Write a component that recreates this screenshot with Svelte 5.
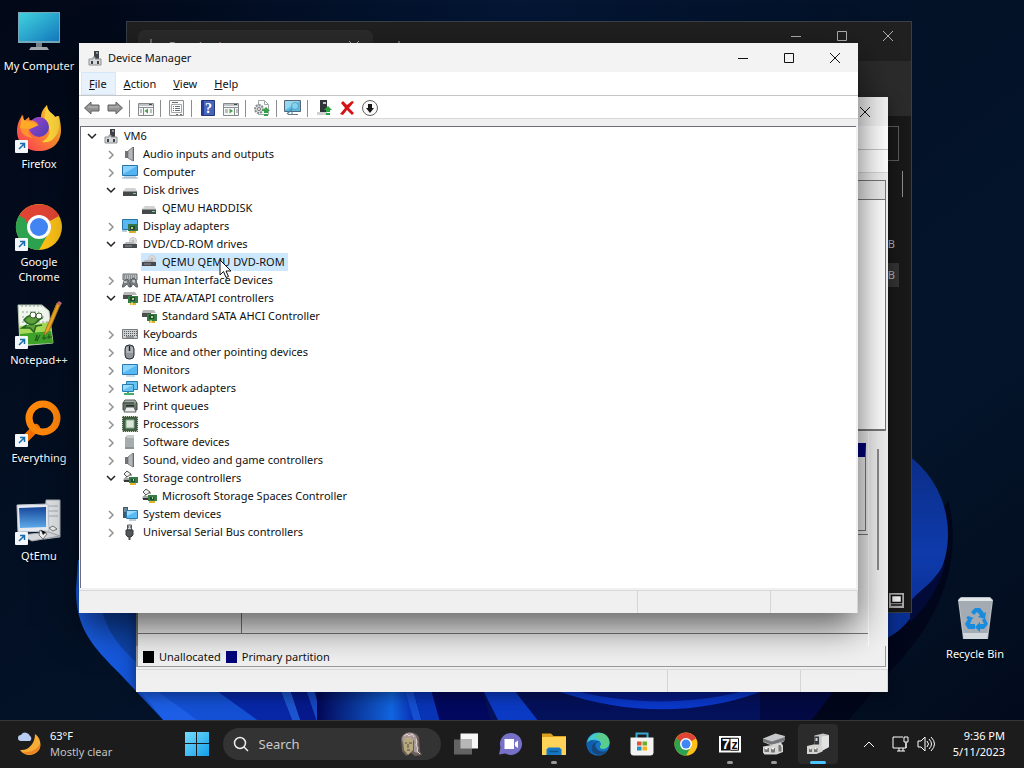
<script lang="ts">
  type Group = { name: string; icon: string; open?: boolean; children?: string[] };

  let groups: Group[] = $state([
    { name: "Audio inputs and outputs", icon: "speaker" },
    { name: "Computer", icon: "computer" },
    { name: "Disk drives", icon: "disk", open: true, children: ["QEMU HARDDISK"] },
    { name: "Display adapters", icon: "display" },
    { name: "DVD/CD-ROM drives", icon: "dvd", open: true, children: ["QEMU QEMU DVD-ROM"] },
    { name: "Human Interface Devices", icon: "hid" },
    {
      name: "IDE ATA/ATAPI controllers",
      icon: "ide",
      open: true,
      children: ["Standard SATA AHCI Controller"],
    },
    { name: "Keyboards", icon: "keyboard" },
    { name: "Mice and other pointing devices", icon: "mouse" },
    { name: "Monitors", icon: "monitor" },
    { name: "Network adapters", icon: "network" },
    { name: "Print queues", icon: "printer" },
    { name: "Processors", icon: "cpu" },
    { name: "Software devices", icon: "software" },
    { name: "Sound, video and game controllers", icon: "speaker" },
    {
      name: "Storage controllers",
      icon: "storage",
      open: true,
      children: ["Microsoft Storage Spaces Controller"],
    },
    { name: "System devices", icon: "system" },
    { name: "Universal Serial Bus controllers", icon: "usb" },
  ]);

  let rootOpen = $state(true);
  let selected = $state("QEMU QEMU DVD-ROM");

  const shortcuts = [
    { name: "My Computer", icon: "pc", link: false },
    { name: "Firefox", icon: "firefox", link: true },
    { name: "Google Chrome", icon: "chrome", link: true },
    { name: "Notepad++", icon: "notepad", link: true },
    { name: "Everything", icon: "everything", link: true },
    { name: "QtEmu", icon: "qtemu", link: true },
  ];

  const tools = [
    "back", "forward", "|", "tree", "|", "props", "|", "help", "action", "|",
    "update", "|", "scan", "|", "enable", "remove", "down",
  ];

  const apps = [
    { name: "Task View", icon: "taskview", state: "" },
    { name: "Chat", icon: "chat", state: "" },
    { name: "File Explorer", icon: "folder", state: "running" },
    { name: "Microsoft Edge", icon: "edge", state: "" },
    { name: "Microsoft Store", icon: "store", state: "" },
    { name: "Google Chrome", icon: "chrome", state: "" },
    { name: "7-Zip", icon: "sevenzip", state: "running" },
    { name: "Disk Management", icon: "diskmgmt", state: "running" },
    { name: "Device Manager", icon: "devmgmt", state: "active" },
  ];
</script>

{#snippet smallIcon(name: string)}
  <svg class="small-icon" viewBox="0 0 16 16" aria-hidden="true">
    {#if name === "root"}
      <path d="M7 1h5v8H7z" fill="#3c4044" />
      <path d="M9 2h2v2H9z" fill="#8d9398" />
      <path d="M2 9h4V7h2v2h6v6H2z" fill="#d5d7d8" stroke="#8c8f91" />
      <path d="M4 11h2v3H4zM10 11h2v3h-2z" fill="#3d4144" />
    {:else if name === "speaker"}
      <path d="M3 5h3v7H3z" fill="#54585c" />
      <path d="M6 5l5-4v14l-5-3z" fill="#b5b7b9" stroke="#85888b" />
      <path d="M11 1h1v14h-1z" fill="#66696c" />
      <path d="M4 5v7" stroke="#8d9093" />
    {:else if name === "computer"}
      <path d="M0.500 1.500h15v10H.5z" fill="#54b4f2" stroke="#2775ad" />
      <path d="M1 2h14L1 10z" fill="#8ad2fb" />
      <path d="M0 14h16M2 13h12" stroke="#8cacc4" />
    {:else if name === "disk"}
      <path d="M4 6h9l2 3H1z" fill="#d0d2d3" />
      <path d="M1 9h14v5H1z" fill="#45494b" />
      <path d="M1 9h14v1H1z" fill="#8d9092" />
      <path d="M11 11h3v1h-3z" fill="#74d78a" />
    {:else if name === "display"}
      <path d="M0.500 1.500h15v10H.5z" fill="#58b6f1" stroke="#2775ad" />
      <path d="M6 6h10v7H6z" fill="#32774b" />
      <path d="M8 8h5v4H8z" fill="#244734" />
      <path d="M9 9h2v2H9z" fill="#b1cf67" />
      <path d="M7 13h7v2H7z" fill="#e3ae25" />
      <path d="M0 13h5" stroke="#7799b3" />
    {:else if name === "dvd"}
      <circle cx="11" cy="5" r="3.500" fill="#e2e2e4" stroke="#c4c5c8" />
      <circle cx="11" cy="5" r="1" fill="#fff" stroke="#aaa" />
      <path d="M4 6h7l4 3H1z" fill="#b4b6b8" />
      <path d="M1 8h14v4H1z" fill="#46494d" />
      <path d="M3 10h7" stroke="#939699" />
    {:else if name === "hid"}
      <path d="M1 2h14v6H1z" fill="#b9bdbf" stroke="#686c6f" />
      <path d="M2 4h12M2 6h12" stroke="#60666a" stroke-dasharray="1 1" />
      <path d="M2 9l3-2 2 2 2 6H7l-2-3-3 3H0zM8 8l4-2 2 2 2 7h-2l-3-3-2 3z" fill="#777f83" stroke="#45494d" stroke-width=".7" />
      <path d="M3 9v2M2 10h3M12 8v3M10 9h3" stroke="#dce1e3" />
    {:else if name === "ide"}
      <path d="M2 2h11l2 3H1z" fill="#b8bab9" />
      <path d="M1 5h9v4H1z" fill="#4b504d" />
      <path d="M6 6h10v7H6z" fill="#357a43" />
      <path d="M8 7h5v4H8z" fill="#1d4f2d" />
      <path d="M10 8h2v2h-2z" fill="#b9d29c" />
      <path d="M8 13h6v2H8z" fill="#e6b32a" />
      <path d="M10 12v3" stroke="#fff3b4" />
    {:else if name === "keyboard"}
      <path d="M.5 3.500h15v9H.5z" fill="#cfd1d2" stroke="#777b7e" />
      <path d="M2 5.500h13M2 7.500h13M2 9.500h13" stroke="#555a5e" stroke-dasharray="1 1" />
      <path d="M4 11h8" stroke="#555a5e" />
    {:else if name === "mouse"}
      <rect x="3" y="1" width="9" height="14" rx="4" fill="#8f959a" stroke="#272c31" />
      <path d="M7 2h1v5H7z" fill="#17212b" />
      <path d="M4 8h7M5 3v4M10 3v4" stroke="#cbd0d3" />
    {:else if name === "monitor"}
      <path d="M.5 2.500h15v10H.5z" fill="#57b8f4" stroke="#2879b2" />
      <path d="M1 3h14L1 11z" fill="#8dd5fc" />
      <path d="M4 14h9" stroke="#9bb9cb" />
    {:else if name === "network"}
      <path d="M4.500 1.500h11v8h-11z" fill="#67c3f3" stroke="#257db2" />
      <path d="M.5 4.500h11v7H.5z" fill="#65c0f1" stroke="#257db2" />
      <path d="M1 5h10L1 10z" fill="#a0dbfa" />
      <path d="M6 12v2M2 14h10" stroke="#45ad64" stroke-width="2" />
    {:else if name === "printer"}
      <path d="M3 2h10l2 3H1z" fill="#a6adab" stroke="#555f59" />
      <path d="M1 5h14v7H1z" fill="#68766c" stroke="#3c4540" />
      <path d="M4 7h8v2H4z" fill="#273029" />
      <path d="M4 9h8l2 5H2z" fill="#eceeec" stroke="#5b605d" />
      <path d="M12 5h2" stroke="#83e597" />
    {:else if name === "cpu"}
      <path d="M0 0h16v16H0z" fill="#3e5d43" />
      <path d="M0 .5h16M0 15.500h16M.5 0v16M15.500 0v16" stroke="#c3c9b4" stroke-dasharray="1 1" />
      <path d="M4 4h8v8H4z" fill="#dce8dc" stroke="#8bae90" />
    {:else if name === "software"}
      <path d="M4 3l1-2h7v14H3V3z" fill="#a7acae" />
      <path d="M5 1v3h7V1z" fill="#c8cccd" />
      <path d="M3 13h9v2H3z" fill="#899295" />
    {:else if name === "storage"}
      <path d="M5 1l4 3-4 3-3-3z" fill="#eff0ed" stroke="#50544f" />
      <path d="M4 7v2h3M9 4v2" fill="none" stroke="#50544f" />
      <path d="M2 8h8l2 3H1z" fill="#a2a7a4" />
      <path d="M7 7h9v6H7z" fill="#367b45" />
      <path d="M9 9h4v3H9z" fill="#1e4d2d" />
      <path d="M11 9h1v2h-1z" fill="#b9d29c" />
      <path d="M8 13h6v2H8z" fill="#e5b32a" />
      <path d="M2 11h5" stroke="#343836" stroke-width="2" />
    {:else if name === "system"}
      <path d="M1 1h5v11H1z" fill="#42596b" />
      <path d="M2 3h3M2 5h3" stroke="#a1b4c0" />
      <path d="M4.500 4.500h11v8h-11z" fill="#5abbf4" stroke="#2c79ac" />
      <path d="M5 5h10L5 10z" fill="#9bdcff" />
      <path d="M7 14h7" stroke="#78a1b9" />
    {:else if name === "usb"}
      <path d="M5.500 1h4v5h-4z" fill="#d2d4d6" stroke="#53585c" />
      <path d="M6 3h1M8 3h1" stroke="#333" />
      <path d="M4 6h7v5l-2 2H6l-2-2z" fill="#51565a" stroke="#373b3e" />
      <path d="M7.500 13v3" stroke="#4a4f52" stroke-width="2" />
    {/if}
  </svg>
{/snippet}

{#snippet toolIcon(name: string)}
  <svg width="18" height="18" viewBox="0 0 18 18" aria-hidden="true">
    {#if name === "back"}
      <path d="M1.500 9L8 3v3h8v6H8v3z" fill="#929292" stroke="#606060" />
      <path d="M5 8h10" stroke="#bdbdbd" />
    {:else if name === "forward"}
      <path d="M16.500 9L10 3v3H2v6h8v3z" fill="#929292" stroke="#606060" />
      <path d="M3 8h10" stroke="#bdbdbd" />
    {:else if name === "tree" || name === "action"}
      <path d="M1.500 4.500h15v12h-15z" fill="#f7f7f7" stroke="#848a8e" />
      <path d="M2 6h14M2 8.500h14" stroke="#898f93" />
      <path d="M12 5.500h3" stroke="#42474b" />
      {#if name === "tree"}
        <path d="M6.500 9v7M3 11h2M3 13h2M13 11h2M13 13h2" stroke="#848a8e" />
        <path d="M11 9.500v5L7.500 12z" fill="#44a245" />
      {:else}
        <path d="M12.500 9v7M3 11h3M3 13h3M14 11h2M14 13h2" stroke="#848a8e" />
        <path d="M7.500 9.500v5L11 12z" fill="#44a245" />
      {/if}
    {:else if name === "props"}
      <path d="M1.500 1.500h14v15h-14z" fill="#f8f8f8" stroke="#8d9194" />
      <path d="M3.500 5.500h10v8h-10z" fill="#fff" stroke="#a5a8aa" />
      <path d="M4 3.500h6M5 7.500h1M7 7.500h5M5 9.500h1M7 9.500h5M5 11.500h1M7 11.500h5M8 15.500h2M12 15.500h2" stroke="#686d71" />
    {:else if name === "help"}
      <path d="M2.500 1.500h13v15h-13z" fill="#4665bd" stroke="#27367c" />
      <path d="M3 2h2v14H3z" fill="#263b91" />
      <text x="6" y="14" class="help-mark">?</text>
    {:else if name === "update"}
      <path d="M5.500 1.500h6l4 4v10h-10z" fill="#fbfbfb" stroke="#a1a6a9" />
      <path d="M11.500 2v3.500h4" fill="none" stroke="#a1a6a9" />
      <circle cx="6" cy="10" r="4" fill="#d7d9da" stroke="#878c8f" stroke-dasharray="2 1" stroke-width="2" />
      <circle cx="6" cy="10" r="1.500" fill="#fff" stroke="#777" />
      <path d="M13 8l4 4h-2v2h-4v-2H9zM11 15h4v2h-4z" fill="#32a445" />
    {:else if name === "scan"}
      <path d="M.5 1.500h16v11H.5z" fill="#57bbe8" stroke="#566774" />
      <path d="M1 2h15L1 11z" fill="#95d7f1" />
      <path d="M8 13v2M4 15.500h10" stroke="#657784" />
      <circle cx="11" cy="7" r="3.500" fill="#9ce1f6" fill-opacity=".6" stroke="#5ba0c0" />
      <path d="M8 10l-5 5" stroke="#4589a7" stroke-width="1.500" />
    {:else if name === "enable"}
      <path d="M5 1h7v12H5z" fill="#303438" />
      <path d="M8 3h3v2H8z" fill="#c1c4c6" />
      <path d="M2 13h10v3H2z" fill="#cfd0d1" />
      <path d="M13 7l4 4h-2v2h-4v-2H9zM11 14h4v2h-4z" fill="#26a33b" />
    {:else if name === "remove"}
      <path d="M3 4l2-2 4 4 5-4 2 1-5 6 5 5-2 2-5-5-4 5-3-1 5-6z" fill="#d41217" />
    {:else if name === "down"}
      <circle cx="9" cy="9" r="7.500" fill="#fafafa" stroke="#606060" />
      <path d="M7 5h4v4h2l-4 5-4-5h2z" fill="#171717" />
    {/if}
  </svg>
{/snippet}

{#snippet bigIcon(name: string)}
  <svg viewBox="0 0 48 48" aria-hidden="true">
    {#if name === "pc"}
      <path d="M3 5h42v31H3z" fill="#78a7b9" />
      <path d="M4 6h40v28H4z" fill="url(#screen)" />
      <path d="M21 36h6v5h-6z" fill="#758088" />
      <path d="M16 40h16l2 3H14z" fill="#a2a9ae" />
    {:else if name === "firefox"}
      <path d="M46 25c0 13-9 21-22 21C11 46 2 38 2 26c0-6 2-12 6-16l1 6 5-4 1 5c3-3 7-5 11-5 0-5 3-9 6-12 0 7 6 8 8 12l4-1c1 4 2 9 2 14z" fill="url(#fire)" />
      <path d="M32 0c0 7 6 8 8 12l3-1c2 8 2 16-4 22-3 4-8 5-12 4 7-4 10-11 5-17-4-5-2-14 0-20z" fill="#ffd43b" />
      <circle cx="24" cy="22" r="10" fill="url(#purple)" />
      <path d="M5 22c5-9 14-8 18-3l-8 4c-3 2-1 7 3 10-8-1-12-4-13-11z" fill="#ff9130" />
      <path d="M7 9c0 6 4 8 9 8l8 3-9 4-10-1z" fill="#ffab28" />
    {:else if name === "chrome"}
      <circle cx="24" cy="24" r="23" fill="#fbc116" />
      <path d="M24 24L4 13A23 23 0 0 1 44 13z" fill="#df4434" />
      <path d="M24 24L4 12.500A23 23 0 0 0 24 47l10-18z" fill="#2da24f" />
      <path d="M24 12h20l-3-4L24 7 9 12l6 17z" fill="#df4434" />
      <circle cx="24" cy="24" r="12" fill="#fff" />
      <circle cx="24" cy="24" r="9" fill="#4285f4" />
    {:else if name === "notepad"}
      <path d="M3 4h24l7 6 4 32-33 3z" fill="#f1f7ee" stroke="#b6c6b1" />
      <path d="M5 25l30-4 3 20-33 3z" fill="#a5d957" />
      <path d="M5 33l31-3 2 12-33 2z" fill="#3fa32a" />
      <path d="M6 5h21M7 11h17M7 16h24M7 21h26" stroke="#939e9a" stroke-dasharray="2 2" />
      <path d="M9 19c5-7 13-5 15 0-5 6-10 6-15 0zM12 24l-5 3 8 0 4 4 2-6 6-1M19 17l4-4 4 4-5 3" fill="#5f9f3c" stroke="#246722" stroke-width="1.500" />
      <circle cx="18" cy="14" r="3" fill="white" stroke="#3c612b" />
      <circle cx="24" cy="15" r="3" fill="white" stroke="#3c612b" />
      <path d="M42 2l3 2-11 26-5 4 2-6z" fill="#f1a923" stroke="#ac7823" />
      <path d="M42 2l2-2 3 2-2 3z" fill="#c56f79" />
      <path d="M20 40l2-6v6l3-6M29 34v5M27 37h5M34 33v5M32 36h5" stroke="#235421" fill="none" />
    {:else if name === "everything"}
      <path d="M8 42l13-13" stroke="#ee7000" stroke-width="8" stroke-linecap="round" />
      <circle cx="28" cy="19" r="14" fill="none" stroke="#ff870a" stroke-width="7" />
    {:else if name === "qtemu"}
      <path d="M31 3h14v37l-16 2z" fill="#dfe2e5" stroke="#a9adb2" />
      <path d="M33 9h10M33 14h10M33 19h10" stroke="#a4a9ae" />
      <path d="M2 8l31-1 1 27-31 1z" fill="#e7eaf0" stroke="#bdc4ce" />
      <path d="M4 11l27-1v20l-26 1z" fill="url(#qt)" />
      <path d="M6 38l28-3 11 4-28 5z" fill="#d5d9dd" stroke="#a0a5aa" />
      <path d="M25 33l7 4-4 5-4-4zM34 31l4-2 4 3-4 2z" fill="#eee" stroke="#777" />
      <path d="M26 33l5 2-3 3z" fill="#111" />
    {:else if name === "bin"}
      <path d="M7 5l3-3h29l3 3-5 39H12z" fill="#b8bec4" />
      <path d="M8 6h33l-5 34H13z" fill="#a5abb3" />
      <path d="M9 3h30l3 3H7z" fill="#e2e7ea" />
      <path d="M12 38h25l-1 6H13z" fill="#d2d7db" />
      <path d="M20 17l4-4h5l4 5 2-1-1 7-7-2 2-2-3-3-3 3zM17 21l6 2-2 1-2 5h5v5h-7l-3-5 3-5-2-1zM34 23l3 6-4 5h-4v3l-5-5 5-5v2h4l-2-4z" fill="#198bdc" />
    {:else if name === "taskview"}
      <path d="M13 3h35v30H13z" fill="#f7f7f7" />
      <path d="M0 15h36v30H0z" fill="#6b6b6b" fill-opacity=".9" />
      <path d="M13 15h23v18H13z" fill="#b7b7b7" />
    {:else if name === "chat"}
      <path d="M25 2a22 22 0 1 1-10 41L2 45l3-14A22 22 0 0 1 25 2z" fill="#7770c7" />
      <path d="M13 14h19v20H13zM34 21l6-4v15l-6-4z" fill="#fff" />
    {:else if name === "folder"}
      <path d="M0 3h18l5 5h25v12H0z" fill="#dca01c" />
      <path d="M0 10h48v36H0z" fill="#ffd258" />
      <path d="M9 35l4-4h22l4 4v11H9z" fill="#1677c5" />
      <path d="M15 39h18" stroke="#0b518c" stroke-width="3" />
    {:else if name === "edge"}
      <circle cx="24" cy="24" r="23" fill="#1575c5" />
      <path d="M2 22C5 8 16 0 30 2c12 2 18 12 17 21-1 8-8 12-16 10-5-1-3-5-1-7 2-10-19-16-28-4z" fill="#46c8cf" />
      <path d="M26 2c17-1 24 16 19 24-3 6-9 9-15 7-4-2-2-5 0-8 2-8-4-13-13-15z" fill="#64cf6c" fill-opacity=".7" />
      <path d="M17 18c-5 9-2 22 9 28C10 45-1 35 2 22c4-5 10-7 15-4z" fill="#0e60ae" />
      <path d="M28 19c-8 1-12 6-7 14 5 7 14 8 22 3-9 16-35 11-31-7 2-8 10-12 16-10z" fill="#17477d" />
    {:else if name === "store"}
      <path d="M13 12V3h22v9" fill="none" stroke="#38a7d7" stroke-width="4" />
      <path d="M1 11h46v31q-1 5-6 5H7q-5 0-6-5z" fill="#f3f3f3" />
      <path d="M14 19h9v8h-9z" fill="#e64d31" />
      <path d="M25 19h9v8h-9z" fill="#6fae28" />
      <path d="M14 29h9v8h-9z" fill="#1b91cb" />
      <path d="M25 29h9v8h-9z" fill="#f3b51d" />
    {:else if name === "sevenzip"}
      <path d="M2 8h44v33H2z" fill="#fff" />
      <path d="M6 12h19v25H6z" fill="#111" />
      <path d="M8 12.500h33v24H25" fill="none" stroke="#111" stroke-width="2" />
      <text x="8" y="34" class="seven">7</text>
      <text x="27" y="34" class="zed">z</text>
    {:else if name === "diskmgmt"}
      <path d="M2 13L27 3l19 5-3 12-24 7L2 20z" fill="#c5c7c8" />
      <path d="M2 13l18 6 26-9v7l-25 9-19-7z" fill="#747779" />
      <path d="M20 25l18-4 4 6v13l-13 5H5l-3-4V29l18-3z" fill="#d6d6d4" />
      <path d="M5 32h9v8H5zM18 32h8v9h-8zM33 26h4l2 5v8h-6z" fill="#777974" />
      <path d="M6 33h5M19 33h5" stroke="#fff" stroke-width="3" />
    {:else if name === "devmgmt"}
      <path d="M17 7L34 3l12 3v24l-15 8H17z" fill="#c3c5c7" />
      <path d="M31 9l15-2v23l-15 8z" fill="#e2e2e2" />
      <path d="M17 9h9v18h-9z" fill="#33363a" />
      <path d="M19 12h4v6h-4z" fill="#d5dadf" />
      <path d="M2 28l13-3h12l6 4v10l-12 5H2z" fill="#d4d4d3" />
      <path d="M6 32h6v8H6zM16 32h7v8h-7z" fill="#73736e" />
      <path d="M7 33h4M17 33h4" stroke="#fff" stroke-width="3" />
    {/if}
  </svg>
{/snippet}

{#snippet caption(last: boolean)}
  <div class="caption">
    {#if !last}
      <button aria-label="Minimize"><svg width="12" height="12"><path d="M1 6.500h10" /></svg></button>
      <button aria-label="Maximize"><svg width="12" height="12"><path d="M1.500 1.500h9v9h-9z" /></svg></button>
    {/if}
    <button aria-label="Close"><svg width="12" height="12"><path d="M1 1l10 10M11 1L1 11" /></svg></button>
  </div>
{/snippet}

<div class="screen">
  <main class="desktop">
    <svg class="wallpaper" viewBox="0 0 1024 768" preserveAspectRatio="xMidYMid slice" aria-hidden="true">
      <defs>
        <linearGradient id="night" x1="0" y1="0" x2="1" y2="1">
          <stop offset="0" stop-color="#020817" />
          <stop offset=".45" stop-color="#031126" />
          <stop offset=".7" stop-color="#04152b" />
          <stop offset="1" stop-color="#020a1b" />
        </linearGradient>
        <radialGradient id="glow" cx="520" cy="0" r="420" gradientUnits="userSpaceOnUse">
          <stop offset="0" stop-color="#041c42" stop-opacity=".6" />
          <stop offset="1" stop-color="#041c42" stop-opacity="0" />
        </radialGradient>
        <linearGradient id="petal" x1="0" y1="0" x2="1" y2="0">
          <stop offset="0" stop-color="#1a62ec" />
          <stop offset=".6" stop-color="#0f46bd" />
          <stop offset="1" stop-color="#0a2f98" />
        </linearGradient>
        <linearGradient id="bloom" x1="0" y1="0" x2="1" y2="0">
          <stop offset="0" stop-color="#030756" />
          <stop offset=".75" stop-color="#1165df" />
          <stop offset="1" stop-color="#0826ad" />
        </linearGradient>
        <linearGradient id="rim" x1="0" y1="0" x2="0" y2="1">
          <stop offset="0" stop-color="#0a2a80" />
          <stop offset=".6" stop-color="#0e3bab" />
          <stop offset="1" stop-color="#0a2a90" />
        </linearGradient>
        <linearGradient id="screen" x1="0" y1="0" x2="1" y2="1">
          <stop offset="0" stop-color="#40d2dd" />
          <stop offset="1" stop-color="#1479bd" />
        </linearGradient>
        <linearGradient id="fire" x1="1" y1="0" x2="0" y2="1">
          <stop offset="0" stop-color="#ffdd3d" />
          <stop offset=".45" stop-color="#ff8d2d" />
          <stop offset="1" stop-color="#f62f5c" />
        </linearGradient>
        <linearGradient id="purple" x1="0" y1="0" x2="1" y2="1">
          <stop offset="0" stop-color="#9f43cc" />
          <stop offset="1" stop-color="#4f40b5" />
        </linearGradient>
        <linearGradient id="qt" x1="0" y1="0" x2="0" y2="1">
          <stop offset="0" stop-color="#16479b" />
          <stop offset="1" stop-color="#5eaceb" />
        </linearGradient>
      </defs>
      <rect width="1024" height="768" fill="url(#night)" />
      <rect width="1024" height="420" fill="url(#glow)" />
      <!-- left petal -->
      <path d="M76 590c0 38 16 56 44 84l45 48h675V560H78z" fill="#04115b" />
      <path d="M76 590c0 38 16 56 44 84l45 48h92L170 640l-30-80H78z" fill="url(#petal)" />
      <path d="M100 600c4 25 14 42 36 62v-82h-36z" fill="#0b3a90" fill-opacity=".6" />
      <!-- folds under the windows -->
      <path d="M136 686h40l28 36h-39z" fill="#1c5fe6" />
      <path d="M150 686h60c26 9 40 20 50 36h-60z" fill="#1450d4" />
      <path d="M210 686h69l18 36h-37z" fill="#0727a7" />
      <path d="M279 686h10l12 36h-8z" fill="#1c55cf" />
      <path d="M289 686h20l14 36h-22z" fill="#05198c" />
      <path d="M305 686h8l10 36h-6z" fill="#1648c4" />
      <path d="M317 686h92l8 36h-100z" fill="url(#bloom)" />
      <path d="M404 686h8l10 36h-8z" fill="#154fd2" />
      <path d="M412 686h20l14 36h-24z" fill="#0834b6" />
      <path d="M430 686h51l10 36h-51z" fill="#02085e" />
      <path d="M481 686h30l28 36h-40z" fill="#0b3ac4" />
      <path d="M560 692h200c-60 22-130 24-200 0z" fill="#0a38cb" />
      <path d="M580 692h160c-50 12-105 13-160 0z" fill="#061a86" />
      <path d="M760 692h90l-26 30h-64z" fill="#030a43" />
      <!-- right petal and its shadow -->
      <path d="M948 500c18 70-18 130-55 168l-46 54h-37l78-100z" fill="#01061b" />
      <circle cx="850" cy="534" r="98" fill="url(#rim)" />
      <path d="M880 610h34c-4 12-14 22-34 32z" fill="#0a2f92" />
      <path d="M946 560c-12 24-24 27-36 42v20c18-16 31-37 36-62z" fill="#020a38" />
    </svg>

    <nav class="shortcuts" aria-label="Desktop">
      {#each shortcuts as item}
        <button class="shortcut">
          <span class="shortcut__icon">
            {@render bigIcon(item.icon)}
            {#if item.link}
              <svg class="arrow" viewBox="0 0 13 13" aria-hidden="true">
                <rect width="13" height="13" rx="1" fill="#f3f6fa" />
                <path d="M4 9l5-5M5 3.500h4.500V8" fill="none" stroke="#176dab" stroke-width="1.500" />
              </svg>
            {/if}
          </span>
          <span class="shortcut__label">{item.name}</span>
        </button>
      {/each}
    </nav>

    <button class="shortcut recycle">
      <span class="shortcut__icon">{@render bigIcon("bin")}</span>
      <span class="shortcut__label">Recycle Bin</span>
    </button>

    <section class="window explorer" aria-label="Downloads">
      <header>
        <div class="tab">
          <svg width="16" height="16" viewBox="0 0 16 16"><path d="M8 1v10M4 7l4 4 4-4M3 15h10" /></svg>
          <span>Downloads</span>
          <svg width="10" height="10" viewBox="0 0 10 10"><path d="M0 0l10 10M10 0L0 10" /></svg>
        </div>
        <svg width="12" height="12" viewBox="0 0 12 12"><path d="M6 0v12M0 6h12" /></svg>
        {@render caption(false)}
      </header>
      <div class="explorer__tools"></div>
      <div class="explorer__search"></div>
      <div class="explorer__files">
        <div class="explorer__list"><span>KB</span><span class="picked">KB</span></div>
        <i></i>
      </div>
      <footer>
        <svg width="15" height="15" viewBox="0 0 15 15" aria-hidden="true">
          <path d="M0 0h15v15H0z" fill="#aaa" />
          <path d="M2.500 2.500h10v7h-10zM2 12h11" fill="#eee" stroke="#111" stroke-width="1.500" />
        </svg>
      </footer>
    </section>

    <section class="window disks" aria-label="Disk Management">
      <header class="titlebar"><span></span>{@render caption(true)}</header>
      <div class="menubar"></div>
      <div class="toolbar"></div>
      <div class="volumes"><div class="volumes__head"></div></div>
      <div class="graph">
        <div class="graph__rows">
          <div class="graph__disk first"><span></span><div class="partition"></div></div>
          <div class="graph__disk"><span></span><div></div></div>
        </div>
        <i></i>
      </div>
      <div class="legend">
        <i></i>Unallocated
        <i class="primary"></i>Primary partition
      </div>
      <footer class="statusbar"><span></span><span></span><span></span></footer>
    </section>

    <section class="window manager" aria-label="Device Manager">
      <header class="titlebar">
        {@render smallIcon("root")}
        <span>Device Manager</span>
        {@render caption(false)}
      </header>
      <nav class="menubar">
        <button class="hover"><u>F</u>ile</button>
        <button><u>A</u>ction</button>
        <button><u>V</u>iew</button>
        <button><u>H</u>elp</button>
      </nav>
      <div class="toolbar">
        {#each tools as tool}
          {#if tool === "|"}
            <i></i>
          {:else}
            <button aria-label={tool}>{@render toolIcon(tool)}</button>
          {/if}
        {/each}
      </div>

      <div class="tree">
        <div class="row">
          {@render chevron(rootOpen, () => (rootOpen = !rootOpen), "VM6")}
          {@render node("VM6", "root")}
        </div>
        {#if rootOpen}
          <ul>
            {#each groups as group}
              <li>
                <div class="row">
                  {@render chevron(!!group.open, () => (group.open = !group.open), group.name)}
                  {@render node(group.name, group.icon)}
                </div>
                {#if group.open && group.children}
                  <ul>
                    {#each group.children as child}
                      <li class="row leaf">{@render node(child, group.icon)}</li>
                    {/each}
                  </ul>
                {/if}
              </li>
            {/each}
          </ul>
        {/if}
      </div>
      <footer class="statusbar"><span></span><span></span><span></span></footer>
    </section>

    <svg class="cursor" width="13" height="20" viewBox="0 0 13 20" aria-hidden="true">
      <path d="M1 1v15l3.500-3.500L7 18.500l2.500-1L7 12h5z" fill="#fff" stroke="#111" />
    </svg>
  </main>

  <footer class="taskbar">
    <button class="weather">
      <svg width="24" height="24" viewBox="0 0 24 24" aria-hidden="true">
        <path d="M17 2c6 4 7 12 3 17-5 6-14 5-18-1 8 1 15-6 15-16z" fill="#f8ab35" />
        <path d="M22 12c-4 7-11 9-18 8 5 4 13 3 17-2 1-2 2-4 1-6z" fill="#ec8424" />
        <path d="M3 9a3 3 0 0 1 0-6 5 5 0 0 1 9 1 3 3 0 0 1 0 5z" fill="#b9cdf4" />
      </svg>
      <span class="weather__text"><span>63°F</span><small>Mostly clear</small></span>
    </button>

    <div class="dock">
      <button class="start" aria-label="Start">
        <svg width="24" height="24" viewBox="0 0 24 24">
          <path d="M0 0h11v11H0zM12 0h12v11H12zM0 12h11v12H0zM12 12h12v12H12z" fill="url(#winlogo)" />
          <defs>
            <linearGradient id="winlogo" x1="0" y1="0" x2="1" y2="1">
              <stop offset="0" stop-color="#75dcff" />
              <stop offset="1" stop-color="#129ee7" />
            </linearGradient>
          </defs>
        </svg>
      </button>
      <label class="search">
        <svg width="16" height="16" viewBox="0 0 16 16" aria-hidden="true">
          <circle cx="7" cy="7" r="5.500" fill="none" stroke="#eee" stroke-width="1.500" />
          <path d="M11 11l4 4" stroke="#eee" stroke-width="1.500" />
        </svg>
        <input type="text" placeholder="Search" aria-label="Search" />
        <svg width="24" height="28" viewBox="0 0 24 28" aria-hidden="true">
          <path d="M2 9C3 1 16 0 20 7l1 14 2 4-7 1-4-3-5 3-4-5z" fill="#6b5f57" />
          <path d="M4 10c1-5 7-6 10-1v11l-5 5-4-5z" fill="#b5aa80" />
          <path d="M3 9C4 2 15 0 18 8l1 15-4-1V11l-4-4-5 1-2 6z" fill="#a8989a" />
          <path d="M6 13h2M10 13h3M8 20h3M9 14v4" stroke="#58483a" />
          <path d="M5 6l3-2 2 2 3-2 2 3M17 9l1 3-1 3 2 3-1 3 3 3" fill="none" stroke="#e3d8da" />
        </svg>
      </label>
      {#each apps as app}
        <button class="app {app.state}" aria-label={app.name}>{@render bigIcon(app.icon)}</button>
      {/each}
    </div>

    <div class="tray">
      <button aria-label="Show hidden icons"><svg width="12" height="8"><path d="M1 7l5-5 5 5" /></svg></button>
      <button class="status" aria-label="Network and volume">
        <svg width="18" height="18" viewBox="0 0 18 18">
          <path d="M11 2H1v11h13V8M5 16h8M7 13v3M11 13v3M12 2h4v5h-4zM14 7v6" />
        </svg>
        <svg width="18" height="18" viewBox="0 0 18 18">
          <path d="M1 6h3l4-4v14l-4-4H1zM10 6q3 3 0 6M12 4q5 5 0 10M14 2q7 7 0 14" />
        </svg>
      </button>
      <button class="clock"><span>9:36 PM</span><span>5/11/2023</span></button>
    </div>
  </footer>
</div>

{#snippet chevron(open: boolean, toggle: () => void, name: string)}
  <button class="chevron" class:open aria-label="Toggle {name}" onclick={toggle}>
    <svg width="10" height="10" viewBox="0 0 10 10">
      {#if open}<path d="M1 3l4 4 4-4" />{:else}<path d="M3 2l4 4-4 4" />{/if}
    </svg>
  </button>
{/snippet}

{#snippet node(name: string, icon: string)}
  <button class="node" class:selected={selected === name} onclick={() => (selected = name)}>
    {@render smallIcon(icon)}
    <span>{name}</span>
  </button>
{/snippet}

<style>
  :global(body) {
    background: #020817;
  }
  .screen {
    display: flex;
    flex-direction: column;
    height: 100vh;
    overflow: hidden;
    font-family: "Noto Sans", "Open Sans", sans-serif;
    font-size: 11px;
    line-height: 16px;
    color: #111;
  }
  .screen * {
    box-sizing: border-box;
  }
  button {
    padding: 0;
    border: 0;
    background: none;
    color: inherit;
    font: inherit;
  }
  svg {
    display: block;
    flex: none;
  }

  /* desktop */
  .desktop {
    position: relative;
    flex: 1;
    min-height: 0;
    overflow: hidden;
  }
  .wallpaper {
    position: absolute;
    inset: 0;
    width: 100%;
    height: 100vh;
  }
  .shortcuts {
    position: relative;
    display: flex;
    flex-direction: column;
    width: 78px;
  }
  .shortcut {
    display: flex;
    flex-direction: column;
    align-items: center;
    gap: 3px;
    height: 98px;
    width: 78px;
    padding-top: 7px;
    color: #fff;
    line-height: 15px;
    text-shadow: 0 1px 2px #000;
  }
  .shortcut__icon {
    position: relative;
    width: 48px;
    height: 48px;
  }
  .shortcut__label {
    padding: 0 1px;
  }
  .arrow {
    position: absolute;
    left: 0;
    bottom: 0;
    width: 13px;
    height: 13px;
  }
  .recycle {
    position: absolute;
    right: 10px;
    bottom: 34px;
  }
  .cursor {
    position: absolute;
    left: 219px;
    top: 259px;
  }

  /* windows */
  .window {
    position: absolute;
    display: flex;
    flex-direction: column;
  }
  .caption {
    display: flex;
    margin-left: auto;
  }
  .caption button {
    display: grid;
    place-items: center;
    width: 46px;
    height: 28px;
  }
  .caption svg,
  .explorer header svg {
    fill: none;
    stroke: currentColor;
  }
  .titlebar {
    display: flex;
    align-items: center;
    gap: 5px;
    height: 29px;
    padding-left: 8px;
    background: #f3f3f3;
  }
  .menubar {
    display: flex;
    height: 24px;
    padding-left: 2px;
    background: #fff;
    border-bottom: 1px solid #c6c6c6;
  }
  .menubar button {
    padding: 0 9px 0 8px;
  }
  .menubar .hover {
    background: #e8f2fc;
    outline: 1px solid #d5e7f9;
    outline-offset: -1px;
  }
  .toolbar {
    display: flex;
    align-items: center;
    height: 23px;
    margin-bottom: 7px;
    padding: 2px 0 0 1px;
    background: #fff;
    border-bottom: 1px solid #d8d8d8;
  }
  .toolbar button {
    display: grid;
    place-items: center;
    width: 23px;
    height: 20px;
  }
  .toolbar i {
    width: 1px;
    height: 17px;
    margin: 0 4px 0 3px;
    background: #8d8d8d;
  }
  .help-mark {
    fill: #fff;
    font: bold 14px "Liberation Serif", serif;
  }
  .seven,
  .zed {
    fill: #fff;
    font: bold 28px "Liberation Sans", sans-serif;
  }
  .zed {
    fill: #111;
    font-size: 25px;
  }
  .statusbar {
    display: flex;
    height: 23px;
    margin-top: 2px;
    border-top: 1px solid #d9d9d9;
    background: #f0f0f0;
  }
  .statusbar span {
    width: 133px;
    border-right: 1px solid #d5d5d5;
  }
  .statusbar span:first-child {
    flex: 1;
  }
  .statusbar span:last-child {
    width: 87px;
  }

  .manager {
    left: 79px;
    top: 43px;
    width: 779px;
    height: 570px;
    background: #f0f0f0;
    box-shadow: 0 14px 34px rgba(0, 0, 0, 0.6);
  }
  .tree {
    flex: 1;
    min-height: 0;
    margin: 0 2px 0 1px;
    background: #fff;
    border-top: 1px solid #6b6e78;
    border-left: 1px solid #6b6e78;
    padding-left: 3px;
  }
  ul {
    margin: 0;
    padding: 0 0 0 19px;
    list-style: none;
  }
  .row {
    display: flex;
    gap: 3px;
    height: 18px;
  }
  .leaf {
    padding-left: 19px;
  }
  .chevron {
    display: grid;
    place-items: center;
    width: 16px;
    color: #929292;
  }
  .chevron.open {
    color: #222;
  }
  .chevron path {
    fill: none;
    stroke: currentColor;
    stroke-width: 1.5;
  }
  .node {
    display: flex;
    align-items: center;
    gap: 5px;
    padding-right: 3px;
    white-space: nowrap;
  }
  .node.selected {
    background: #cce8ff;
  }
  .small-icon {
    width: 16px;
    height: 16px;
  }

  .disks {
    left: 136px;
    top: 97px;
    width: 752px;
    background: #f0f0f0;
    box-shadow: 0 4px 14px rgba(0, 0, 0, 0.4);
  }
  .volumes {
    height: 251px;
    margin-right: 2px;
    background: #fff;
    border: 1px solid #777;
    border-width: 1px 1px 2px;
  }
  .volumes__head {
    height: 19px;
    background: #ececec;
    border-bottom: 1px solid #777;
  }
  .graph {
    display: flex;
    gap: 8px;
    height: 215px;
    border-left: 2px solid #777;
  }
  .graph__rows {
    display: flex;
    flex-direction: column;
    width: 731px;
    border-right: 1px solid #fff;
  }
  .graph__disk {
    display: flex;
    height: 99px;
    border-bottom: 1px solid #777;
  }
  .graph__disk span {
    width: 104px;
    border-right: 1px solid #777;
  }
  .graph__disk.first {
    height: 104px;
  }
  .partition {
    flex: 1;
    margin: 12px 2px 3px;
    border: 1px solid #777;
    border-top: 14px solid #00007b;
  }
  .graph i {
    width: 2px;
    height: 121px;
    margin-top: 18px;
    background: #8b8b8b;
  }
  .legend {
    display: flex;
    align-items: center;
    gap: 5px;
    height: 21px;
    margin-right: 2px;
    padding: 1px 0 0 5px;
    border: 1px solid #999;
    border-width: 0 1px 1px 2px;
  }
  .legend i {
    width: 11px;
    height: 12px;
    background: #000;
  }
  .legend .primary {
    background: #00007b;
  }

  .explorer {
    left: 126px;
    top: 21px;
    width: 786px;
    height: 592px;
    background: #191919;
    border: 1px solid #3a3f44;
    color: #b0b0b0;
  }
  .explorer header {
    display: flex;
    align-items: flex-start;
    height: 39px;
    background: #202020;
  }
  .explorer header > svg {
    margin: 19px 0 0 20px;
  }
  .tab {
    display: flex;
    align-items: center;
    gap: 10px;
    width: 235px;
    height: 31px;
    margin: 8px 0 0 11px;
    padding: 0 14px 0 5px;
    background: #2b2b2b;
    border-radius: 7px 7px 0 0;
  }
  .tab span {
    flex: 1;
  }
  .explorer__tools {
    height: 55px;
    background: #2b2b2b;
  }
  .explorer__search {
    height: 35px;
    margin: 10px 12px 0;
    border: 1px solid #5a5a5a;
  }
  .explorer__files {
    display: flex;
    flex: 1;
    gap: 3px;
    margin-right: 8px;
  }
  .explorer__list {
    display: flex;
    flex: 1;
    flex-direction: column;
    gap: 7px;
    padding-top: 71px;
    line-height: 24px;
    text-align: right;
  }
  .explorer__list span {
    padding-right: 4px;
  }
  .explorer__list .picked {
    background: #333;
  }
  .explorer__files i {
    width: 1px;
    height: 26px;
    margin-top: 10px;
    background: #8b8b8b;
  }
  .explorer footer {
    display: flex;
    justify-content: flex-end;
    padding: 0 7px 4px;
  }

  /* taskbar */
  .taskbar {
    position: relative;
    display: grid;
    grid-template-columns: 1fr auto 1fr;
    height: 48px;
    padding: 0 19px 0 9px;
    background: #1c1c1c;
    box-shadow: inset 0 1px #353535;
    color: #fff;
  }
  .weather {
    display: flex;
    align-items: center;
    gap: 8px;
    padding-left: 9px;
    text-align: left;
    white-space: nowrap;
  }
  .weather__text,
  .clock {
    display: flex;
    flex-direction: column;
  }
  .weather small {
    color: #c3c3c3;
    font-size: 11px;
  }
  .dock {
    display: flex;
    align-items: center;
  }
  .start {
    display: grid;
    place-items: center;
    width: 44px;
    margin-right: 4px;
  }
  .search {
    display: flex;
    align-items: center;
    gap: 10px;
    width: 218px;
    height: 32px;
    margin-right: 3px;
    padding: 0 18px 0 10px;
    border-radius: 16px;
    background: #333;
  }
  .search input {
    flex: 1;
    min-width: 0;
    padding: 0;
    border: 0;
    outline: 0;
    background: none;
    color: #fff;
    font: inherit;
    font-size: 13px;
  }
  .search input::placeholder {
    color: #c9c9c9;
    opacity: 1;
  }
  .app {
    display: flex;
    flex-direction: column;
    align-items: center;
    justify-content: space-between;
    width: 40px;
    height: 40px;
    margin: 0 2px;
    padding-top: 8px;
    border-radius: 4px;
  }
  .app svg {
    width: 24px;
    height: 24px;
  }
  .app.running::after,
  .app.active::after {
    content: "";
    width: 6px;
    height: 3px;
    border-radius: 2px;
    background: #999;
  }
  .app.active {
    background: #2b2b2b;
  }
  .app.active::after {
    width: 16px;
    background: #4cc2ff;
  }
  .tray {
    display: flex;
    align-items: center;
    justify-content: flex-end;
    gap: 17px;
  }
  .tray svg {
    fill: none;
    stroke: #fff;
  }
  .status {
    display: flex;
    gap: 7px;
    margin-right: 1px;
  }
  .clock {
    text-align: right;
  }
</style>
